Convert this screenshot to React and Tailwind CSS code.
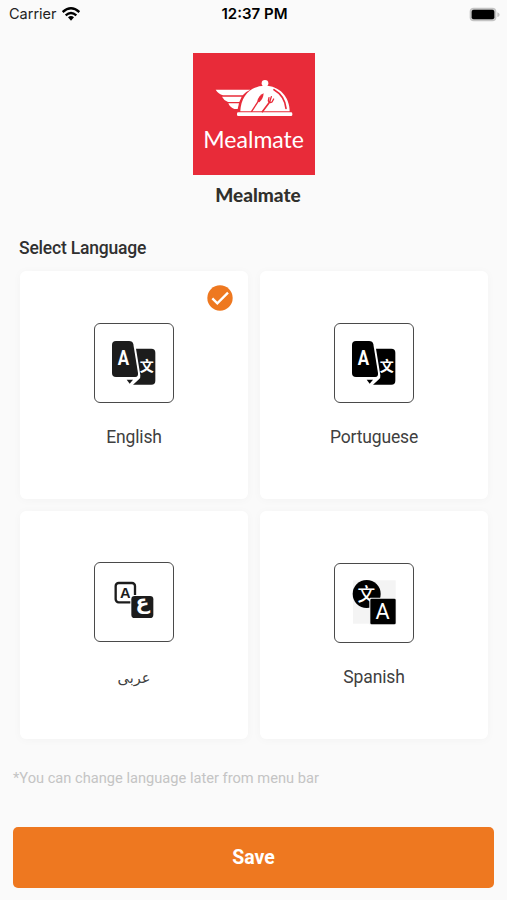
import { useState } from 'react';

// Two overlapping translation cards, used for Latin languages
function TranslateCards({ color }) {
  return (
    <svg viewBox="0 0 240 240" className="w-20 h-20 shrink-0" fill={color}>
      <path d="M66 54H105Q116 54 118 64L132 150Q133 162 124 162H66Q54 162 54 150V66Q54 54 66 54Z" />
      <path d="M126 77H172Q184 77 184 89V173Q184 185 172 185H117L135 169Q140 165 139 157Z" />
      <path d="M98 170H117L107 182Z" />
      <text x="88" y="127" textAnchor="middle" fontSize="63" fontWeight="700" fill="#fff" fontFamily="Roboto, sans-serif" textLength="34" lengthAdjust="spacingAndGlyphs">A</text>
      <text x="158" y="145" textAnchor="middle" fontSize="42" fontWeight="700" fill="#fff" fontFamily="'Noto Sans CJK SC', sans-serif">文</text>
    </svg>
  );
}

function ArabicIcon() {
  return (
    <svg viewBox="0 0 240 240" className="w-20 h-20 shrink-0">
      <rect x="65" y="63" width="58" height="58" rx="9" fill="#fff" stroke="#1c1c1c" strokeWidth="7" />
      <text x="94" y="108" textAnchor="middle" fontSize="44" fontWeight="700" fill="#1c1c1c" fontFamily="'Liberation Sans', sans-serif">A</text>
      <rect x="109" y="99" width="71" height="71" rx="11" fill="#fff" />
      <rect x="112" y="102" width="66" height="66" rx="10" fill="#1c1c1c" />
      <text x="145" y="141" textAnchor="middle" fontSize="61" fontWeight="700" fill="#fff" fontFamily="'DejaVu Sans', sans-serif">ع</text>
    </svg>
  );
}

function SpanishIcon() {
  return (
    <svg viewBox="0 0 240 240" className="w-20 h-20 shrink-0">
      <rect x="57" y="52" width="128" height="130" fill="#f4f4f4" />
      <circle cx="98" cy="93" r="42" fill="#000" />
      <text x="97" y="114" textAnchor="middle" fontSize="53" fontWeight="500" fill="#fff" fontFamily="'Noto Sans CJK SC', sans-serif">文</text>
      <rect x="106" y="104" width="81" height="82" rx="4" fill="#f4f4f4" />
      <rect x="109" y="107" width="76" height="77" rx="4" fill="#000" />
      <text x="146" y="168" textAnchor="middle" fontSize="65" fill="#fff" fontFamily="Roboto, sans-serif">A</text>
    </svg>
  );
}

function Logo() {
  return (
    <svg viewBox="0 0 366 366" className="w-[122px] h-[122px] bg-[#e82b39]">
      <g fill="#fff">
        <path d="M68 110H172Q157 116 149 127H90Q76 123 68 110Z" />
        <path d="M87 131H146L139 147H105Q93 143 87 131Z" />
        <path d="M106 151H138L134 168H124Q111 164 106 151Z" />
        <circle cx="216" cy="91" r="10" />
        <path d="M142 175C143 130 173 98 216 98C259 98 289 130 290 175Z" />
        <rect x="132" y="178" width="166" height="11" rx="4" />
      </g>
      <g fill="none" stroke="#e82b39" strokeLinecap="round">
        <path d="M243 110Q275 128 279 166" strokeWidth="5" />
        <path d="M197 143L176 175" strokeWidth="4" />
        <path d="M230 147L208 176" strokeWidth="5" />
        <path d="M228 134L226 144Q230 151 237 147L242 138M235 131L231 144" strokeWidth="4" />
      </g>
      <path d="M212 121Q196 128 193 145L199 148Q211 138 212 121Z" fill="#e82b39" />
      <text x="31" y="286" fontSize="69" fill="#fff" fontFamily="Lato, sans-serif" textLength="302" lengthAdjust="spacingAndGlyphs">Mealmate</text>
    </svg>
  );
}

function StatusBar() {
  return (
    <div className="grid grid-cols-3 items-center h-7 pl-[9px] pr-[7px] text-black">
      <div className="flex items-center gap-[5px] text-[14.5px] text-[#222]">
        Carrier
        <svg viewBox="0 0 54 42" className="w-[18px] h-[14px]" fill="none" stroke="#000" strokeWidth="7">
          <path d="M2 15Q27 -7 52 15" />
          <path d="M11 25Q27 11 43 25" />
          <path d="M18 31Q27 23 36 31L27 41Z" fill="#000" stroke="none" />
        </svg>
      </div>
      <div className="text-center text-[15px] font-semibold">12:37 PM</div>
      <svg viewBox="0 0 93 45" className="w-[31px] h-[15px] justify-self-end">
        <rect x="2" y="2" width="80" height="41" rx="12" fill="#c4c4c4" />
        <rect x="8" y="8" width="68" height="29" rx="6" fill="#000" />
        <path d="M85 16Q92 18 92 23T85 30Z" fill="#c4c4c4" />
      </svg>
    </div>
  );
}

// LanguageCard - Selectable tile with a framed icon and label
function LanguageCard({ label, icon, selected, onClick, className, labelClassName }) {
  return (
    <button
      onClick={onClick}
      className={`relative h-[228px] flex flex-col items-center bg-white rounded-md shadow-[0_1px_10px_rgba(0,0,0,0.03)] ${className}`}
    >
      {selected && (
        <svg viewBox="0 0 78 78" className="absolute top-[14px] right-[15px] w-[26px] h-[26px]">
          <circle cx="39" cy="39" r="38" fill="#ee7820" />
          <path d="M16 40L31 55L63 23" fill="none" stroke="#fff" strokeWidth="7" />
        </svg>
      )}
      <div className="w-20 h-20 flex items-center justify-center border border-[#4a4a4a] rounded-md">{icon}</div>
      <span className={`leading-6 text-[#404040] ${labelClassName}`}>{label}</span>
    </button>
  );
}

const latinLabel = 'mt-[22px] text-[17.5px] tracking-[-0.15px]';

const languages = [
  { id: 'en', label: 'English', icon: <TranslateCards color="#1c1c1c" />, className: 'pt-[52px]', labelClassName: latinLabel },
  { id: 'pt', label: 'Portuguese', icon: <TranslateCards color="#000" />, className: 'pt-[52px]', labelClassName: latinLabel },
  { id: 'ar', label: 'عربى', icon: <ArabicIcon />, className: 'pt-[51px]', labelClassName: 'mt-[25px] text-[14.5px]' },
  { id: 'es', label: 'Spanish', icon: <SpanishIcon />, className: 'pt-[52px]', labelClassName: latinLabel },
];

export default function App() {
  const [selected, setSelected] = useState('en');

  return (
    <div className="h-[900px] flex flex-col bg-[#fafafa] font-[Inter,sans-serif] overflow-hidden">
      <StatusBar />
      <div className="flex flex-col items-center pt-[25px]">
        <Logo />
        <h1 className="mt-2 pl-[9px] text-[19px] leading-6 font-black text-[#30302c] font-[Lato,sans-serif]">Mealmate</h1>
      </div>
      <main className="flex flex-col font-[Roboto,'DejaVu_Sans',sans-serif]">
        <h2 className="mt-[29px] ml-[19px] text-[17.5px] tracking-[-0.2px] leading-6 font-medium text-[#303030]">Select Language</h2>
        <div className="mt-[11px] pl-5 pr-[19px] grid grid-cols-2 gap-3">
          {languages.map((lang) => (
            <LanguageCard
              key={lang.id}
              label={lang.label}
              icon={lang.icon}
              className={lang.className}
              labelClassName={lang.labelClassName}
              selected={selected === lang.id}
              onClick={() => setSelected(lang.id)}
            />
          ))}
        </div>
        <p className="mt-[29px] ml-[13px] text-[14.65px] leading-5 text-[#c4c4c4]">*You can change language later from menu bar</p>
        <button className="mt-[39px] mx-[13px] h-[61px] rounded-[5px] bg-[#ee7820] text-white text-[19.5px] font-bold">Save</button>
      </main>
    </div>
  );
}
